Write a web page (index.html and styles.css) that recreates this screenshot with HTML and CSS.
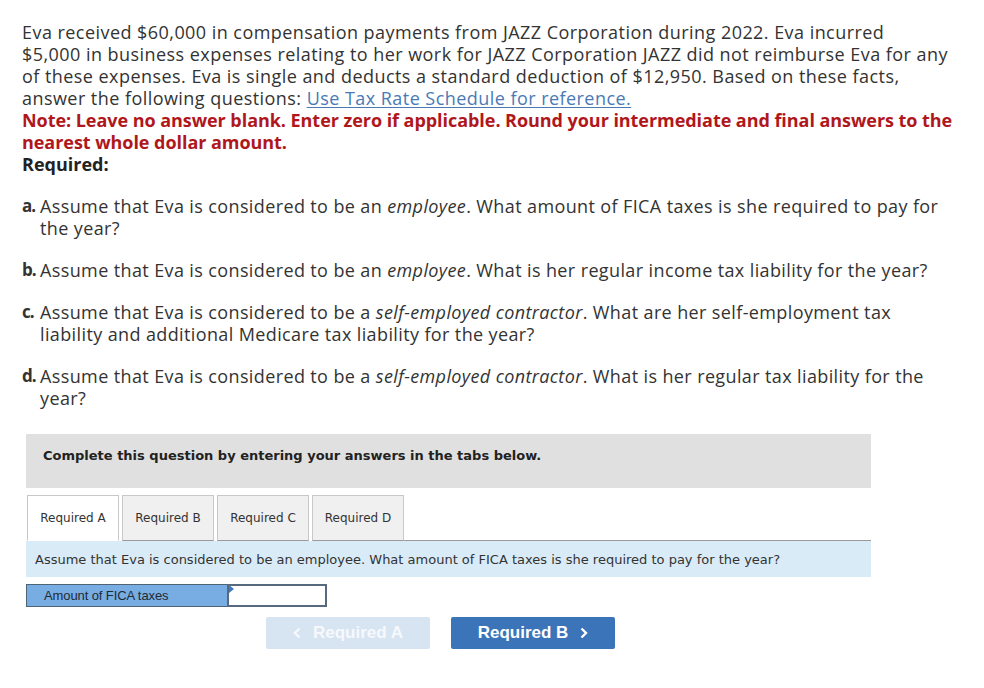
FILE: index.html
```html
<!DOCTYPE html>
<html>
<head>
<meta charset="utf-8">
<link rel="stylesheet" href="styles.css">
</head>
<body>
<div class="page">
  <div class="intro">
    <p class="para">Eva received $60,000 in compensation payments from JAZZ Corporation during 2022. Eva incurred<br>$5,000 in business expenses relating to her work for JAZZ Corporation JAZZ did not reimburse Eva for any<br>of these expenses. Eva is single and deducts a standard deduction of $12,950. Based on these facts,<br>answer the following questions: <a class="link" href="#">Use Tax Rate Schedule for reference.</a></p>
    <p class="note">Note: Leave no answer blank. Enter zero if applicable. Round your intermediate and final answers to the<br>nearest whole dollar amount.</p>
    <p class="req">Required:</p>
  </div>
  <ol class="items">
    <li class="item"><span class="letter">a.</span><span class="itext">Assume that Eva is considered to be an <em>employee</em>. What amount of FICA taxes is she required to pay for<br>the year?</span></li>
    <li class="item"><span class="letter">b.</span><span class="itext">Assume that Eva is considered to be an <em>employee</em>. What is her regular income tax liability for the year?</span></li>
    <li class="item"><span class="letter">c.</span><span class="itext">Assume that Eva is considered to be a <em>self-employed contractor</em>. What are her self-employment tax<br>liability and additional Medicare tax liability for the year?</span></li>
    <li class="item"><span class="letter">d.</span><span class="itext">Assume that Eva is considered to be a <em>self-employed contractor</em>. What is her regular tax liability for the<br>year?</span></li>
  </ol>

  <div class="question">
    <div class="banner">Complete this question by entering your answers in the tabs below.</div>
    <div class="tabs">
      <div class="tab active">Required A</div>
      <div class="tab">Required B</div>
      <div class="tab">Required C</div>
      <div class="tab">Required D</div>
      <div class="tab-fill"></div>
    </div>
    <div class="prompt">Assume that Eva is considered to be an employee. What amount of FICA taxes is she required to pay for the year?</div>
    <div class="answer-row">
      <div class="answer-label">Amount of FICA taxes</div>
      <div class="answer-input"><span class="marker"></span></div>
    </div>
    <div class="nav">
      <button class="btn prev"><svg class="chev" width="8" height="12" viewBox="0 0 8 12"><path d="M6.5 1.5 L2 6 L6.5 10.5" fill="none" stroke="currentColor" stroke-width="2.4"/></svg><span>Required A</span></button>
      <button class="btn next"><span>Required B</span><svg class="chev" width="8" height="12" viewBox="0 0 8 12"><path d="M1.5 1.5 L6 6 L1.5 10.5" fill="none" stroke="currentColor" stroke-width="2.4"/></svg></button>
    </div>
  </div>
</div>
</body>
</html>
```

FILE: styles.css
```css
html, body {
  margin: 0;
  padding: 0;
  background: #ffffff;
}

.page {
  padding: 21px 0 0 22px;
  width: 950px;
  font-family: "Open Sans", "Liberation Sans", sans-serif;
  font-size: 18px;
  line-height: 22px;
  letter-spacing: 0.45px;
  color: #333333;
}

.intro p {
  margin: 0;
  white-space: nowrap;
}

.link {
  color: #4a7ab5;
  text-decoration: underline;
  text-underline-offset: 2px;
}

.note {
  color: #b0171c;
  font-weight: 700;
  letter-spacing: -0.05px;
}

.req {
  font-weight: 700;
  color: #222222;
  letter-spacing: 0;
}

.items {
  list-style: none;
  margin: 0;
  padding: 0;
}

.item {
  display: flex;
  margin-top: 20px;
  white-space: nowrap;
}

.itext {
  letter-spacing: 0.38px;
}

.letter {
  width: 18px;
  font-size: 17px;
  font-weight: 700;
  letter-spacing: -0.9px;
  flex: none;
}

.item em {
  font-style: italic;
}

.question {
  margin: 25px 0 0 4px;
  width: 845px;
  letter-spacing: 0;
}

.banner {
  background: #e0e0e0;
  height: 54px;
  box-sizing: border-box;
  padding: 14px 17px 0;
  font-family: "DejaVu Sans", Verdana, sans-serif;
  font-size: 13px;
  line-height: 16px;
  font-weight: 700;
  color: #222222;
}

.tabs {
  display: flex;
  margin-top: 7px;
  padding-left: 1px;
  gap: 3px;
  height: 46px;
}

.tab {
  width: 92px;
  box-sizing: border-box;
  border: 1px solid #c8c8c8;
  border-bottom: 1px solid #9a9a9a;
  background: #f0f0f0;
  font-family: "DejaVu Sans", Verdana, sans-serif;
  font-size: 12px;
  color: #333333;
  display: flex;
  align-items: center;
  justify-content: center;
}

.tab.active {
  background: #ffffff;
  border-color: #c8c8c8;
  border-bottom-color: #ffffff;
}

.tab-fill {
  flex: 1;
  border-bottom: 1px solid #9a9a9a;
  margin-left: -3px;
}

.prompt {
  background: #daebf8;
  height: 36px;
  box-sizing: border-box;
  padding: 11px 9px 0;
  font-family: "DejaVu Sans", Verdana, sans-serif;
  font-size: 13px;
  line-height: 16px;
  color: #333333;
}

.answer-row {
  display: flex;
  margin-top: 7px;
  height: 23px;
}

.answer-label {
  width: 201px;
  box-sizing: border-box;
  background: #78ade3;
  border: 1px solid #4f6377;
  border-right: none;
  padding: 3px 0 0 17px;
  font-family: "Liberation Sans", Arial, sans-serif;
  font-size: 13px;
  letter-spacing: -0.1px;
  line-height: 15px;
  color: #222a33;
}

.answer-input {
  position: relative;
  width: 100px;
  box-sizing: border-box;
  background: #ffffff;
  border: 2px solid #56697e;
}

.marker {
  position: absolute;
  left: 0;
  width: 0;
  height: 0;
  border-top: 4px solid transparent;
  border-bottom: 4px solid transparent;
  border-left: 5px solid #3d79c2;
  top: -1px;
}

.nav {
  display: flex;
  gap: 21px;
  margin: 10px 0 0 240px;
}

.btn {
  width: 164px;
  height: 32px;
  border: none;
  border-radius: 2px;
  font-family: "Liberation Sans", Arial, sans-serif;
  font-size: 17px;
  font-weight: 700;
  color: #ffffff;
  padding: 0;
  display: flex;
  align-items: center;
  justify-content: center;
  gap: 12px;
}

.prev {
  background: #d7e4f2;
  color: #f6f9fc;
}

.next {
  background: #3b74b9;
}
```
